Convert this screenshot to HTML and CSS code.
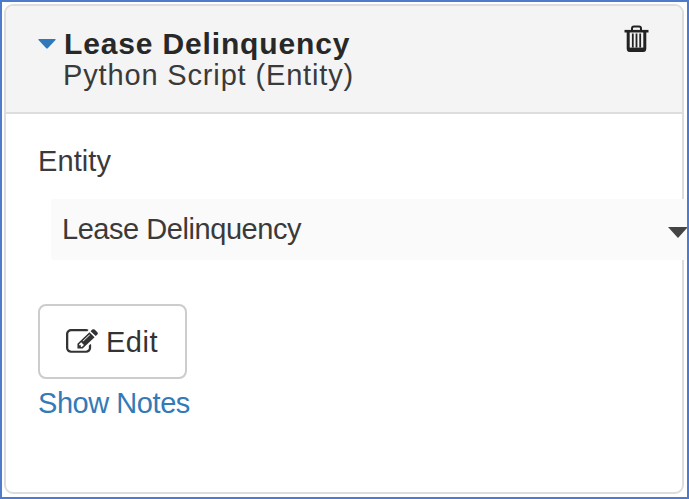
FILE: index.html
```html
<!DOCTYPE html>
<html lang="en">
<head>
<meta charset="utf-8">
<title>Lease Delinquency</title>
<link rel="stylesheet" href="styles.css">
</head>
<body>
<main class="frame">
  <section class="card">
    <header class="card-header">
      <svg class="toggle" viewBox="0 0 18 10"><path d="M1 0H17Q18.500 0 17 1.500L10 9Q9 10 8 9L1 1.500Q-.5 0 1 0Z" fill="currentColor"/></svg>
      <div class="heading">
        <h1 class="title">Lease Delinquency</h1>
        <div class="subtitle">Python Script (Entity)</div>
      </div>
      <svg class="trash" viewBox="0 0 25 28" fill="none" stroke="currentColor">
        <path d="M8 6V3.500Q8 1.500 10 1.500H15Q17 1.500 17 3.500V6" stroke-width="2"/>
        <path d="M.5 6.200H24.500" stroke-width="2.600"/>
        <path d="M4.200 6V23.500Q4.200 25.500 6 25.500H19Q20.800 25.500 20.800 23.500V6" stroke-width="3"/>
        <path d="M4.500 24.500H20.500" stroke-width="3.800"/>
        <path d="M8.800 8.500V22.500M12.500 8.500V22.500M16.200 8.500V22.500" stroke-width="1.800"/>
      </svg>
    </header>
    <div class="card-body">
      <div class="label">Entity</div>
      <div class="select">
        <span class="value">Lease Delinquency</span>
        <svg class="arrow" viewBox="0 0 20 11"><path d="M0 0H20L10 11Z" fill="currentColor"/></svg>
      </div>
      <button class="edit" type="button">
        <svg class="pencil" viewBox="0 0 1792 1536" preserveAspectRatio="none"><path fill="currentColor" d="M888 1056l116-116-152-152-116 116v56h96v96h56zm440-720q-16-16-33 1l-350 350q-17 17-1 33t33-1l350-350q17-17 1-33zm80 594v190q0 119-84.500 203.500t-203.500 84.500h-832q-119 0-203.500-84.500t-84.500-203.500v-832q0-119 84.500-203.500t203.500-84.500h832q63 0 117 25 15 7 18 23 3 17-9 29l-49 49q-14 14-32 8-23-6-45-6h-832q-66 0-113 47t-47 113v832q0 66 47 113t113 47h832q66 0 113-47t47-113v-126q0-13 9-22l64-64q15-15 35-7t20 29zm-96-738l288 288-672 672h-288v-288zm444 132l-92 92-288-288 92-92q28-28 68-28t68 28l152 152q28 28 28 68t-28 68z"/></svg>
        <span>Edit</span>
      </button>
      <a class="notes">Show Notes</a>
    </div>
  </section>
</main>
</body>
</html>
```
FILE: styles.css
```css
* { box-sizing: border-box; }
body {
  margin: 0;
  overflow: hidden;
  font: 29px/31px "Liberation Sans", Arial, sans-serif;
  color: #3a3a3a;
}
.frame {
  width: 689px;
  height: 499px;
  padding: 2px 3px 3px 2px;
  border: 2px solid #4e7bcb;
  background: #fff;
  overflow: hidden;
}
.card {
  height: 490px;
  width: 680px;
  border: 2px solid #ddd;
  border-radius: 9px;
  background: #fff;
}
.card-header {
  display: flex;
  height: 108px;
  padding: 23px 33px 0 32px;
  background: #f4f4f4;
  border-bottom: 2px solid #ddd;
  border-radius: 7px 7px 0 0;
}
.toggle {
  width: 18px;
  height: 10px;
  margin-top: 10px;
  color: #2f78b9;
}
.heading { flex: 1; margin-left: 6px; }
.title {
  margin: -1px 0 1px;
  padding-left: 2px;
  font-size: 30px;
  line-height: 31px;
  letter-spacing: .85px;
  color: #282828;
}
.subtitle { padding-left: 1px; letter-spacing: .85px; }
.trash {
  width: 25px;
  height: 28px;
  margin: -4px 0 0;
  color: #222;
}
.card-body { padding: 32px 0 0 32px; }
.label { letter-spacing: .1px; }
.select {
  display: flex;
  align-items: center;
  justify-content: space-between;
  width: 637px;
  height: 61px;
  margin: 22px 0 0 13px;
  padding: 0 0 1px 11px;
  border-radius: 3px;
  background: #fafafa;
}
.value { letter-spacing: -.45px; }
.arrow {
  flex: none;
  width: 20px;
  height: 11px;
  margin: 6px 0 0;
  color: #444;
}
.edit {
  display: flex;
  align-items: center;
  gap: 8px;
  width: 149px;
  height: 75px;
  margin-top: 44px;
  padding: 1px 0 0 26px;
  border: 2px solid #ccc;
  border-radius: 8px;
  background: #fff;
  font: inherit;
  letter-spacing: .5px;
  color: #333;
}
.pencil { width: 32px; height: 26px; }
.notes {
  display: inline-block;
  margin-top: 9px;
  letter-spacing: -.45px;
  color: #337ab7;
}
```
